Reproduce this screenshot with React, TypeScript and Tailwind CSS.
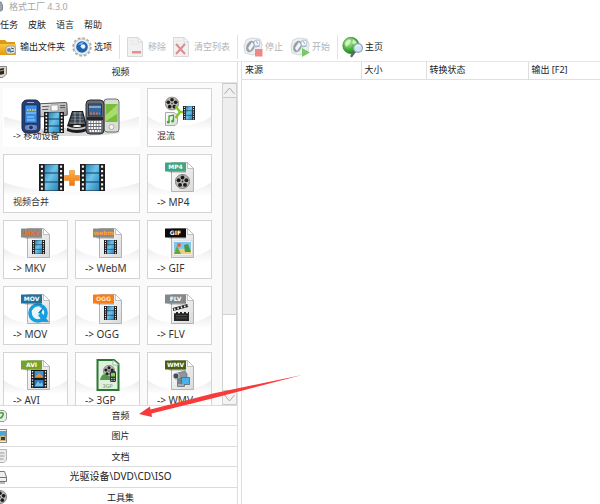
// src/App.tsx
import type { ReactNode } from 'react';

const columns = [
  { title: '来源', className: 'w-[119px]' },
  { title: '大小', className: 'w-[65px]' },
  { title: '转换状态', className: 'w-[102px]' },
  { title: '输出 [F2]', className: '' },
];

function Film({ x, y, w, h }: { x: number; y: number; w: number; h: number }) {
  return (
    <svg x={x} y={y} width={w} height={h} viewBox="0 0 24 27" preserveAspectRatio="none">
      <rect width="24" height="27" fill="#1d1d1f" />
      <rect x="5.5" y="0.5" width="13" height="26" fill="url(#filmBlue)" />
      <path d="M5 9H19M5 18H19" stroke="#123a56" strokeWidth="1.2" />
      <path d="M2.8 1.6V27M21.2 1.6V27" stroke="#f2f2f2" strokeWidth="2" strokeDasharray="2.2 2.2" />
    </svg>
  );
}

function Reel({ cx, cy, r }: { cx: number; cy: number; r: number }) {
  return (
    <svg x={cx - r} y={cy - r} width={r * 2} height={r * 2} viewBox="-10 -10 20 20">
      <circle r="9.4" fill="#b9b9b6" stroke="#77777a" strokeWidth="1.2" />
      <circle cy="-5.4" r="2.6" fill="#201a1a" />
      <circle cx="5.2" cy="-1.7" r="2.6" fill="#201a1a" />
      <circle cx="3.3" cy="4.5" r="2.6" fill="#201a1a" />
      <circle cx="-3.3" cy="4.5" r="2.6" fill="#201a1a" />
      <circle cx="-5.2" cy="-1.7" r="2.6" fill="#201a1a" />
      <circle r="1.2" fill="#333" />
    </svg>
  );
}

function Defs() {
  return (
    <svg className="absolute h-0 w-0" aria-hidden="true">
      <defs>
        <linearGradient id="filmBlue" x1="0" y1="0" x2="1" y2="1">
          <stop offset="0" stopColor="#2a7fb0" />
          <stop offset="0.45" stopColor="#6cc3ea" />
          <stop offset="1" stopColor="#2585bd" />
        </linearGradient>
        <linearGradient id="wave" x1="0" y1="0" x2="0" y2="1">
          <stop offset="0" stopColor="#ececec" />
          <stop offset="0.9" stopColor="#ffffff" />
        </linearGradient>
        <linearGradient id="page" x1="0" y1="0" x2="1" y2="1">
          <stop offset="0" stopColor="#ffffff" />
          <stop offset="1" stopColor="#d9d9d9" />
        </linearGradient>
        <linearGradient id="orange" x1="0" y1="0" x2="0" y2="1">
          <stop offset="0" stopColor="#ffb347" />
          <stop offset="1" stopColor="#ee7410" />
        </linearGradient>
        <linearGradient id="folder" x1="0" y1="0" x2="0" y2="1">
          <stop offset="0" stopColor="#f9c83e" />
          <stop offset="1" stopColor="#e49a12" />
        </linearGradient>
        <linearGradient id="metal" x1="0" y1="0" x2="1" y2="1">
          <stop offset="0" stopColor="#f2f2f2" />
          <stop offset="1" stopColor="#8d8f92" />
        </linearGradient>
        <radialGradient id="globe" cx="0.35" cy="0.3" r="0.8">
          <stop offset="0" stopColor="#c5f2b0" />
          <stop offset="0.5" stopColor="#4cb83f" />
          <stop offset="1" stopColor="#14701b" />
        </radialGradient>
      </defs>
    </svg>
  );
}

type FileIconProps = {
  tag: string;
  color: string;
  textColor?: string;
  children: ReactNode;
};

function FileIcon({ tag, color, textColor = '#fff', children }: FileIconProps) {
  return (
    <svg width="31" height="32" viewBox="0 0 31 32" className="shrink-0">
      <path d="M7.5 1.5H23.5L29.5 7.5V30.5H7.5Z" fill="url(#page)" stroke="#b4b4b4" />
      <path d="M23.5 1.5V7.5H29.5Z" fill="#fff" stroke="#b4b4b4" strokeWidth="0.8" />
      {children}
      <rect x="1" y="1.5" width="21" height="9" rx="0.5" fill={color} />
      <path d="M3 10.5H22V11.5H6Z" fill="#000" opacity="0.3" />
      <text
        x="11.5"
        y="8.3"
        textAnchor="middle"
        fontSize="6"
        fontWeight="700"
        fill={textColor}
        fontFamily="'DejaVu Sans', sans-serif"
      >
        {tag}
      </text>
    </svg>
  );
}

function MobileIcon() {
  return (
    <svg width="102" height="32" viewBox="0 0 102 32" className="shrink-0 overflow-visible">
      <ellipse cx="50" cy="37" rx="49" ry="4" fill="#000" opacity="0.14" />
      <g transform="rotate(-3 33 12)">
        <rect x="18" y="8" width="28" height="13" rx="1.5" fill="url(#metal)" stroke="#555" />
        <rect x="30" y="10" width="7" height="6" fill="#f8f8f8" stroke="#777" strokeWidth="0.6" />
        <path d="M21 11H28M21 14H27M39 11H44M39 13H44" stroke="#444" strokeWidth="0.8" />
      </g>
      <rect x="1" y="5" width="18" height="33" rx="5" fill="#253f78" stroke="#17264d" />
      <rect x="4" y="10" width="12" height="18" fill="#3d8ee3" stroke="#17264d" strokeWidth="0.6" />
      <path d="M5 18H15M6 22H13M6 25H14" stroke="#9ad4fb" strokeWidth="1" />
      <path d="M6 15H15" stroke="#f5d45a" strokeWidth="1.5" strokeDasharray="1.5 1" />
      <path d="M6 7.5H13" stroke="#94a7d1" />
      <rect x="4" y="30" width="12" height="5" rx="2" fill="#6e87bb" />
      <circle cx="10" cy="32.5" r="2.4" fill="#203362" stroke="#b7c5e2" strokeWidth="0.6" />
      <Film x={23} y={17} w={20} h={21} />
      <path d="M51 16H62L66 31V36Q56 40 46 36V31Z" fill="#1c1c1f" />
      <path d="M52 17H61L64 29H48Z" fill="#5b6671" />
      <path d="M51 20H62M50 23H62M49 26H63" stroke="#20262c" strokeWidth="1.2" />
      <path d="M54 17V29M59 17V29" stroke="#a5b2bc" strokeWidth="0.8" />
      <path d="M46 31Q55 35 66 31V33Q55 37 46 33Z" fill="#c6c8cb" />
      <ellipse cx="56" cy="31" rx="4" ry="1" fill="#fff" />
      <rect x="83" y="4" width="15" height="33" rx="3" fill="#d8ddd6" stroke="#6c716c" />
      <rect x="84.5" y="9" width="12" height="18" fill="#79bd38" />
      <path d="M85 20L96 10V19L85 26Z" fill="#a9dc6a" />
      <circle cx="90.5" cy="32" r="2.5" fill="#f4f4f4" stroke="#888" strokeWidth="0.6" />
      <rect x="65" y="5" width="18" height="34" rx="4" fill="#686c72" stroke="#2c2d30" />
      <rect x="67.5" y="9" width="13" height="12" fill="#35669d" stroke="#222" strokeWidth="0.7" />
      <path d="M68 12H80" stroke="#d9e5ef" strokeWidth="1" />
      <path d="M69 18.5H79" stroke="#e76c2f" strokeWidth="2" strokeDasharray="2 1" />
      <rect x="66" y="22" width="16" height="3" fill="#24262a" />
      <path d="M67.5 27H81M67.5 30H81M67.5 33H81M68.5 36H80" stroke="#fff" strokeWidth="1.8" strokeDasharray="1.9 0.8" />
    </svg>
  );
}

function MuxIcon() {
  return (
    <svg width="31" height="32" viewBox="0 0 31 32" className="shrink-0">
      <Reel cx={8} cy={8.5} r={7} />
      <path d="M1.5 17.5H10L13.5 20V28L11 30.5H1.5Z" fill="url(#page)" stroke="#aaa" />
      <path d="M5 27V21L9.5 20V26" fill="none" stroke="#43a72b" strokeWidth="1.3" />
      <circle cx="4.3" cy="27" r="1.5" fill="#43a72b" />
      <circle cx="8.6" cy="26" r="1.5" fill="#43a72b" />
      <path d="M11.5 11L16 17M11.5 23L16 17H19" fill="none" stroke="#87c52b" strokeWidth="2.4" />
      <Film x={19} y={11} w={12} h={14} />
    </svg>
  );
}

function MergeIcon() {
  return (
    <svg width="66" height="32" viewBox="0 0 66 32" className="shrink-0">
      <Film x={0} y={3} w={25} h={27} />
      <Film x={41} y={3} w={25} h={27} />
      <path
        d="M30.5 9.5H35.5V14.5H40.5V19.5H35.5V24.5H30.5V19.5H25.5V14.5H30.5Z"
        fill="url(#orange)"
        stroke="#e08a3a"
        strokeWidth="0.6"
      />
    </svg>
  );
}

function GifIcon() {
  return (
    <FileIcon tag="GIF" color="#0b0b0b">
      <rect x="9" y="14" width="19" height="14" fill="#fff" stroke="#ccc" strokeWidth="0.6" />
      <rect x="10" y="15" width="17" height="12" fill="#7fc3ef" />
      <path d="M10 24Q16 20 27 23V27H10Z" fill="#e9cf76" />
      <path d="M10 27L13 19L17 27Z" fill="#63a839" />
      <path d="M20 18L24 17L27 25H21Z" fill="#3f9c4c" />
      <circle cx="15" cy="18" r="2" fill="#df6b3c" />
    </FileIcon>
  );
}

function MovIcon() {
  return (
    <FileIcon tag="MOV" color="#22719b">
      <circle cx="18" cy="20" r="8" fill="#e8f6fd" stroke="#169fdd" strokeWidth="3.6" />
      <path d="M18 20L24 13L21 21Z" fill="#0f80c0" />
      <path d="M18 22L22 20L29 29H23Z" fill="#169fdd" />
      <path d="M12 19Q14 13 20 14" stroke="#fff" fill="none" strokeWidth="0.8" />
    </FileIcon>
  );
}

function FlvIcon() {
  return (
    <FileIcon tag="FLV" color="#85888a">
      <rect x="10" y="19" width="15" height="9" fill="#252525" />
      <path d="M9 16.5L24 12.5" stroke="#252525" strokeWidth="3" />
      <path d="M10 16.5L24 12.5" stroke="#eee" strokeWidth="2" strokeDasharray="1.5 2" />
      <path d="M10 19.5H25" stroke="#eee" strokeWidth="1.5" strokeDasharray="2 2" />
      <path d="M12 22.5H23M12 25H23" stroke="#666" strokeWidth="0.6" />
    </FileIcon>
  );
}

function AviIcon() {
  return (
    <FileIcon tag="AVI" color="#75a329">
      <rect x="11" y="11" width="16" height="18" fill="#171717" />
      <path d="M12.5 12V29M25.5 12V29" stroke="#eee" strokeWidth="1.4" strokeDasharray="1.4 1.4" />
      <rect x="14.5" y="12" width="9" height="7" fill="#3c96cf" />
      <rect x="14.5" y="21" width="9" height="7" fill="#2e7cb5" />
      <path d="M15 18L19 14L23 18Z" fill="#e38d46" />
      <path d="M15 27L18 22L20 25L22 23L23 27Z" fill="#7ac0e5" />
    </FileIcon>
  );
}

function ThreeGpIcon() {
  return (
    <svg width="31" height="32" viewBox="0 0 31 32" className="shrink-0">
      <path d="M5.5 1H22L26.5 5V31H5.5Z" fill="#dff0dc" stroke="#2c7633" strokeWidth="2" />
      <path d="M21 1V6H27Z" fill="#fff" stroke="#72a872" strokeWidth="0.7" />
      <Reel cx={17} cy={12} r={6} />
      <path d="M8 21Q10 12 17 17L20 21Z" fill="#4e9a47" />
      <rect x="18" y="12" width="6" height="11" rx="1.5" fill="#303936" />
      <rect x="19" y="14" width="4" height="3.5" fill="#82d252" />
      <path d="M19 19.5H23M19 21.5H23" stroke="#ccc" strokeWidth="0.8" strokeDasharray="1 0.5" />
      <text x="15.5" y="28.5" fontSize="5" textAnchor="middle" fill="#6b8f6d" fontFamily="'DejaVu Sans', sans-serif">
        3GP
      </text>
    </svg>
  );
}

function WmvIcon() {
  return (
    <FileIcon tag="WMV" color="#4d5c12">
      <path d="M10 15L21 12L23 15V20H11Z" fill="#8d969c" stroke="#59636a" strokeWidth="0.6" />
      <circle cx="12" cy="17" r="3" fill="#404e58" stroke="#d8e0e4" strokeWidth="0.8" />
      <rect x="13" y="19" width="8" height="9" rx="1" fill="#75828a" />
      <rect x="17.5" y="18.5" width="8" height="7" fill="#49b2ec" stroke="#5b666d" strokeWidth="0.8" />
      <path d="M14 26H20" stroke="#d4d9dc" strokeWidth="1" />
    </FileIcon>
  );
}

const tiles = [
  { label: '-> 移动设备', icon: <MobileIcon />, wide: true, flat: true },
  { label: '混流', icon: <MuxIcon /> },
  { label: '视频合并', icon: <MergeIcon />, wide: true },
  {
    label: '-> MP4',
    icon: (
      <FileIcon tag="MP4" color="#44a47c">
        <Reel cx={18.5} cy={20.5} r={7.5} />
      </FileIcon>
    ),
  },
  {
    label: '-> MKV',
    icon: (
      <FileIcon tag="MKV" color="#8a8a8a" textColor="#f9691a">
        <Film x={12} y={13} w={13} h={14} />
      </FileIcon>
    ),
  },
  {
    label: '-> WebM',
    icon: (
      <FileIcon tag="webm" color="#8a8a8a" textColor="#ffa51a">
        <Film x={12} y={13} w={13} h={14} />
      </FileIcon>
    ),
  },
  { label: '-> GIF', icon: <GifIcon /> },
  { label: '-> MOV', icon: <MovIcon /> },
  {
    label: '-> OGG',
    icon: (
      <FileIcon tag="OGG" color="#f57d1c" textColor="#ffe3bd">
        <Film x={12} y={13} w={13} h={14} />
      </FileIcon>
    ),
  },
  { label: '-> FLV', icon: <FlvIcon /> },
  { label: '-> AVI', icon: <AviIcon /> },
  { label: '-> 3GP', icon: <ThreeGpIcon /> },
  { label: '-> WMV', icon: <WmvIcon /> },
];

type TileProps = {
  label: string;
  icon: ReactNode;
  wide?: boolean;
  flat?: boolean;
};

function Tile({ label, icon, wide, flat }: TileProps) {
  // Chinese glyphs fill the whole em, latin names need one more pixel
  const latin = /^[\x20-\x7e]+$/.test(label);
  return (
    <button
      className={`relative flex h-[59px] flex-col items-center border bg-white pt-[6px] ${
        wide ? 'col-span-2' : ''
      } ${flat ? 'border-white' : 'border-[#d4d4d4]'}`}
    >
      <svg className="absolute inset-0 h-full w-full" viewBox="0 0 62 56" preserveAspectRatio="none" aria-hidden="true">
        <path d="M0 27Q12 36 31 36T62 27V42H0Z" fill="url(#wave)" />
      </svg>
      <span className="relative flex">{icon}</span>
      <span
        className={`relative mt-[2px] w-full pl-[9px] text-left leading-[14px] whitespace-nowrap text-[#333] ${
          latin ? 'text-[10px]' : 'text-[9px]'
        }`}
      >
        {label}
      </span>
    </button>
  );
}

function FolderIcon() {
  return (
    <svg width="16" height="20" viewBox="0 0 16 20">
      <path d="M-4 3H5L7 5H15V17H-4Z" fill="#dd9a1a" />
      <path d="M-4 7H16V18H-4Z" fill="url(#folder)" />
      <rect x="6" y="9" width="9.5" height="8" rx="3" fill="#dfe7ea" stroke="#8793a0" strokeWidth="0.7" />
      <circle cx="9" cy="13" r="2" fill="#64829d" />
      <path d="M11 11L14 12M10 15L14 14" stroke="#3d4e63" strokeWidth="1" />
    </svg>
  );
}

function GearIcon() {
  return (
    <svg width="20" height="20" viewBox="0 0 20 20">
      <circle cx="10" cy="10" r="8.7" fill="none" stroke="#aaadb0" strokeWidth="2.2" strokeDasharray="2.7 1.85" />
      <circle cx="10" cy="10" r="8" fill="#eceef0" stroke="#bcbfc2" strokeWidth="0.8" />
      <circle cx="10" cy="10" r="5.8" fill="#1e63b4" />
      <circle cx="11" cy="9.6" r="2.4" fill="#e9f3fc" />
      <path d="M6 8Q8 4.5 12 5.5L9.5 7.5Z" fill="#78b9ef" />
      <path d="M9 10Q9.5 12.5 12.5 12Q10 14.5 8 12Z" fill="#1e63b4" />
    </svg>
  );
}

function SheetIcon({ children }: { children: ReactNode }) {
  return (
    <svg width="17" height="20" viewBox="0 0 17 20">
      <path d="M0.5 0.5H11L15.5 5V19.5H0.5Z" fill="#f1f1f1" stroke="#d8d8d8" />
      <path d="M11 0.5V5H15.5Z" fill="#fff" stroke="#d8d8d8" />
      <path d="M3 4H8M3 7H12" stroke="#dfe5ea" strokeWidth="0.8" />
      {children}
    </svg>
  );
}

function ConvertIcon({ children }: { children: ReactNode }) {
  return (
    <svg width="20" height="20" viewBox="0 0 20 20">
      <g opacity="0.55">
        <path d="M3 3L8 1L17 2L19 7L18 15L10 18L2 16L1 9Z" fill="#dfe3e6" stroke="#a5abb0" strokeWidth="0.8" />
        <ellipse cx="7.5" cy="9.5" rx="4" ry="6" transform="rotate(24 7.5 9.5)" fill="#40566a" />
        <path d="M5 11L9 5L11 8L7 14Z" fill="#e9eef2" />
        <circle cx="14" cy="6" r="3" fill="#f4f6f8" stroke="#6c7a88" strokeWidth="0.8" />
        <path d="M12 10L17 9M13 4L15 7" stroke="#5183b4" strokeWidth="1.2" />
      </g>
      {children}
    </svg>
  );
}

function GlobeIcon() {
  return (
    <svg width="21" height="21" viewBox="0 0 21 21">
      <circle cx="9" cy="8.5" r="8.2" fill="url(#globe)" stroke="#27752a" strokeWidth="0.6" />
      <path d="M3 6Q6 2 9 3L7 7L4 10ZM11 2L15 5L13 8L10 6Z" fill="#e4f9d9" opacity="0.8" />
      <path d="M13 14L9.5 19" stroke="#5e6269" strokeWidth="2.4" strokeLinecap="round" />
      <circle cx="16" cy="11" r="4.4" fill="#cfe6f7" stroke="#8fa3b4" strokeWidth="1.2" />
      <path d="M13.5 10Q15 7.5 17.5 8.5" stroke="#fff" fill="none" strokeWidth="1" />
    </svg>
  );
}

type ToolButtonProps = {
  label: string;
  icon: ReactNode;
  disabled?: boolean;
  tight?: boolean;
};

function ToolButton({ label, icon, disabled, tight }: ToolButtonProps) {
  return (
    <button
      disabled={disabled}
      className={`flex items-center text-[9px] whitespace-nowrap ${tight ? 'gap-[2px]' : 'gap-1'} ${
        disabled ? 'text-[#b4b4b4]' : 'text-[#222]'
      }`}
    >
      {icon}
      {label}
    </button>
  );
}

function Toolbar() {
  return (
    <div className="flex h-[24px] shrink-0">
      <div className="flex gap-[7px] border-r border-[#e2e2e2] pr-[7px]">
        <ToolButton label="输出文件夹" icon={<FolderIcon />} />
        <ToolButton label="选项" icon={<GearIcon />} tight />
      </div>
      <div className="flex gap-[7px] border-r border-[#e2e2e2] px-[7px]">
        <ToolButton
          label="移除"
          disabled
          icon={
            <SheetIcon>
              <rect x="5" y="14" width="9" height="2.5" fill="#e58f8f" />
            </SheetIcon>
          }
        />
        <ToolButton
          label="清空列表"
          disabled
          icon={
            <SheetIcon>
              <path d="M3 7L12 17M12 7L3 17" stroke="#e08b8b" strokeWidth="2" />
            </SheetIcon>
          }
        />
      </div>
      <div className="flex gap-[7px] border-r border-[#e2e2e2] pr-[7px] pl-[5px]">
        <ToolButton
          label="停止"
          disabled
          tight
          icon={
            <ConvertIcon>
              <rect x="12" y="12" width="7.5" height="7.5" fill="#ec8888" />
            </ConvertIcon>
          }
        />
        <ToolButton
          label="开始"
          disabled
          tight
          icon={
            <ConvertIcon>
              <path d="M12 11L20 15.5L12 20Z" fill="#74cb66" />
            </ConvertIcon>
          }
        />
      </div>
      <div className="flex pl-1">
        <ToolButton label="主页" icon={<GlobeIcon />} tight />
      </div>
    </div>
  );
}

const categories = [
  {
    label: '音频',
    icon: (
      <>
        <path d="M-8 1.5H4L6.5 4V10L4 12.5H-8Z" fill="#ededed" stroke="#999" />
        <path d="M0 4Q4 3 3 6T0 9" fill="none" stroke="#3aa533" strokeWidth="1.6" />
      </>
    ),
  },
  {
    label: '图片',
    icon: (
      <>
        <rect x="-8" y="0.5" width="14.5" height="13" fill="#eee" stroke="#8b8b8b" />
        <rect x="-8" y="2" width="14" height="10" fill="#4aa4dd" />
        <path d="M-2 8L3 6L6 8V12H-2Z" fill="#d9b777" />
        <rect x="1" y="8" width="4" height="3" fill="#2f3f45" />
      </>
    ),
  },
  {
    label: '文档',
    icon: (
      <>
        <path d="M-8 0.5H6.5V11L4 13.5H-8Z" fill="#ebebeb" stroke="#b5b5b5" />
        <path d="M0 4H4.5M0 7H4.5M0 10H3.5" stroke="#999" />
      </>
    ),
  },
  {
    label: '光驱设备\\DVD\\CD\\ISO',
    icon: (
      <>
        <path d="M-8 1.5H4.5L6.5 7V11.5H-8Z" fill="#eee" stroke="#777" />
        <path d="M-4 7.5H6.5M0 13H5" stroke="#777" />
      </>
    ),
  },
  { label: '工具集', icon: <Reel cx={0} cy={7} r={7} /> },
];

function CategoryIcon({ children }: { children: ReactNode }) {
  return (
    <svg width="8" height="14" viewBox="0 0 8 14" className="shrink-0" aria-hidden="true">
      {children}
    </svg>
  );
}

function Scrollbar() {
  return (
    <div className="flex w-[15px] shrink-0 flex-col border-x border-[#d2d2d2] bg-white">
      <button aria-label="Scroll up" className="flex h-[15px] items-center justify-center border-y border-[#c9c9c9] bg-[#f1f1f1]">
        <svg width="11" height="8" viewBox="0 0 11 8">
          <path d="M0.5 7L5.5 1L10.5 7" fill="none" stroke="#aaa" />
        </svg>
      </button>
      <div className="h-[217px] border-b border-[#d2d2d2] bg-[#eeeeee]" />
      <button
        aria-label="Scroll down"
        className="mt-auto flex h-[15px] items-center justify-center border-y border-[#c9c9c9] bg-[#f4f4f4]"
      >
        <svg width="11" height="8" viewBox="0 0 11 8">
          <path d="M0.5 1L5.5 7L10.5 1" fill="none" stroke="#aaa" />
        </svg>
      </button>
    </div>
  );
}

function Sidebar() {
  return (
    <aside className="flex min-h-0 w-[238px] shrink-0 flex-col border-r border-[#dedede]">
      <button className="flex h-[21px] shrink-0 items-center border-b border-[#e4e4e4] pr-1 text-[9px]">
        <CategoryIcon>
          <path d="M-8 1.5H6.5V9L3 12.5H-8Z" fill="#d9d5cd" stroke="#8b8780" />
          <path d="M-1 4L4 3V9L-1 10Z" fill="#2b2522" />
          <path d="M0 6L4 5" stroke="#a79a8d" />
        </CategoryIcon>
        <span className="flex-1">视频</span>
      </button>
      <div className="flex min-h-0 flex-1 overflow-hidden bg-[#fafafa]">
        <div className="grid flex-1 auto-rows-[59px] grid-cols-[65px_65px_65px] gap-[7px] pt-[5px] pl-[3px]">
          {tiles.map((tile) => (
            <Tile key={tile.label} {...tile} />
          ))}
        </div>
        <Scrollbar />
      </div>
      <div className="-mb-[3px] grid h-[102px] shrink-0 grid-rows-5 bg-white">
        {categories.map((category) => (
          <button key={category.label} className="flex items-center border-t border-[#dcdcdc] pr-1 text-[9px]">
            <CategoryIcon>{category.icon}</CategoryIcon>
            <span className={`flex-1 ${category.label.includes('DVD') ? 'text-[10px]' : ''}`}>{category.label}</span>
          </button>
        ))}
      </div>
    </aside>
  );
}

export default function App() {
  return (
    <div className="relative flex h-screen flex-col overflow-hidden bg-white font-['Noto_Sans','Noto_Sans_CJK_SC',sans-serif] text-[#222]">
      <Defs />
      <header className="flex h-[13px] shrink-0 items-center gap-[6px] text-[9px] leading-[13px] text-[#a5a5a5]">
        <svg width="3" height="12" viewBox="0 0 3 12" aria-hidden="true">
          <path d="M-4 1H1L2.5 4V9L1 10H-4Z" fill="#9ca5ae" stroke="#66707a" strokeWidth="0.7" />
        </svg>
        <h1>格式工厂 4.3.0</h1>
      </header>
      <nav className="flex h-[22px] shrink-0 items-center gap-[10px] pt-[2px] text-[9px]">
        <button>任务</button>
        <button>皮肤</button>
        <button>语言</button>
        <button>帮助</button>
      </nav>
      <Toolbar />
      <div className="mt-[2px] flex min-h-0 flex-1 border-t border-[#e6e6e6]">
        <Sidebar />
        <main className="ml-[3px] min-w-0 flex-1 border-l border-[#dedede]">
          <table className="w-full table-fixed border-collapse text-[9px]">
            <thead>
              <tr className="h-[17px] border-b border-[#e0e0e0]">
                {columns.map((column) => (
                  <th
                    key={column.title}
                    className={`border-r border-[#dedede] pl-[3px] text-left leading-[14px] font-normal last:border-r-0 ${column.className}`}
                  >
                    {column.title}
                  </th>
                ))}
              </tr>
            </thead>
          </table>
        </main>
      </div>
      <svg
        className="pointer-events-none absolute top-[374px] left-[138px]"
        width="165"
        height="45"
        viewBox="0 0 165 45"
        aria-hidden="true"
      >
        <path d="M1 40L12 32.5L12.5 35.5L75 19.5L164 1L76 24L13.5 39.5L14 43Z" fill="#f83a3a" />
      </svg>
    </div>
  );
}
